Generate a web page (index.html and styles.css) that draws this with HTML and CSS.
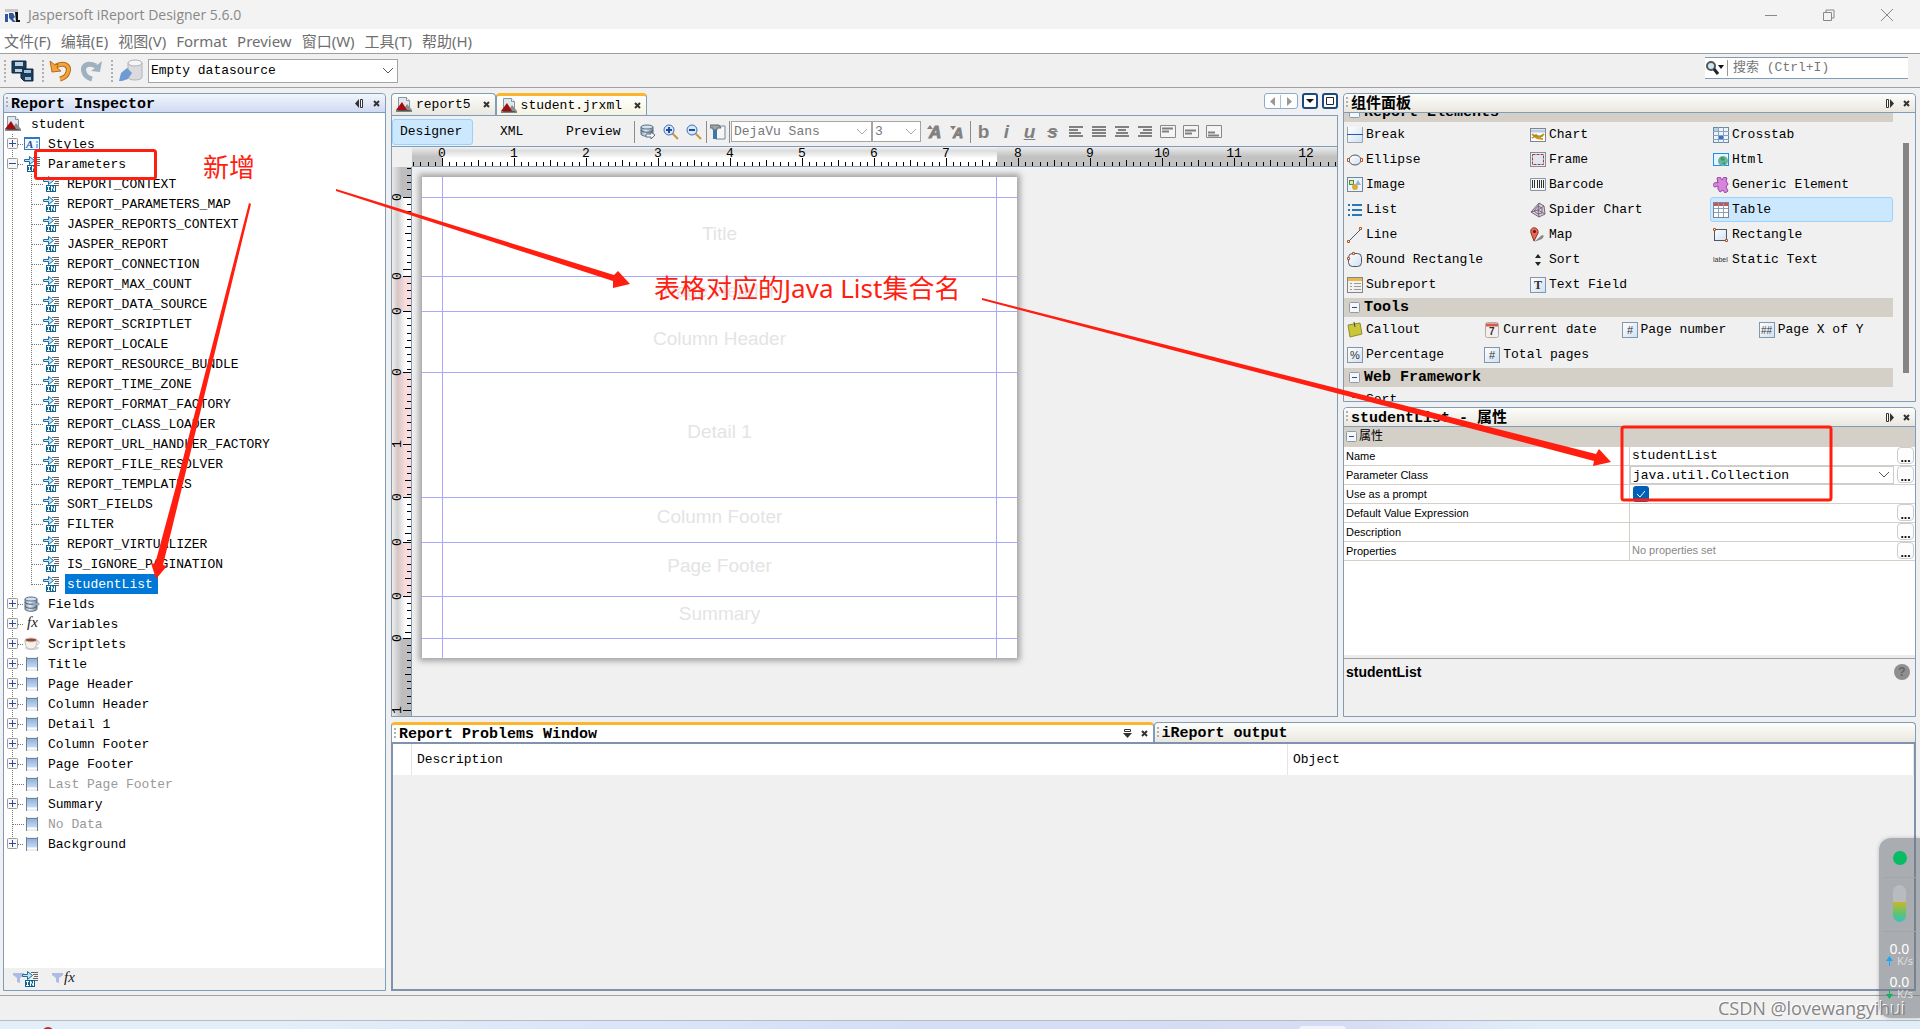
FILE: index.html
```html
<!DOCTYPE html>
<html lang="zh-CN">
<head>
<meta charset="utf-8">
<title>Jaspersoft iReport Designer 5.6.0</title>
<link rel="stylesheet" href="styles.css">
</head>
<body>
<svg class="defs" aria-hidden="true">
  <defs>
    <linearGradient id="g-band" x1="0" y1="0" x2="0" y2="1"><stop offset="0" stop-color="#8fb3dc"/><stop offset="1" stop-color="#c3d8f0"/></linearGradient>
    <linearGradient id="g-blue" x1="0" y1="0" x2="1" y2="1"><stop offset="0" stop-color="#fff"/><stop offset="1" stop-color="#cfe0f2"/></linearGradient>
    <linearGradient id="g-cyl" x1="0" y1="0" x2="1" y2="0"><stop offset="0" stop-color="#8a9db0"/><stop offset=".4" stop-color="#e4ecf4"/><stop offset="1" stop-color="#71869c"/></linearGradient>
    <pattern id="inch-h" width="72" height="19" patternUnits="userSpaceOnUse">
      <path d="M0 11h1v8h-1zM7 15h1v4h-1zM14 15h1v4h-1zM22 15h1v4h-1zM29 15h1v4h-1zM36 13h1v6h-1zM43 15h1v4h-1zM50 15h1v4h-1zM58 15h1v4h-1zM65 15h1v4h-1z"/>
    </pattern>
    <pattern id="inch-v" width="19" height="72" patternUnits="userSpaceOnUse">
      <path d="M11 0h8v1h-8zM15 7h4v1h-4zM15 14h4v1h-4zM15 22h4v1h-4zM15 29h4v1h-4zM13 36h6v1h-6zM15 43h4v1h-4zM15 50h4v1h-4zM15 58h4v1h-4zM15 65h4v1h-4z"/>
    </pattern>
  </defs>
  <symbol id="t-plus" viewBox="0 0 20 20"><path d="M8.500 0v20M14 10.500h6" stroke="#777" stroke-dasharray="1 1" fill="none"/><rect x="3.500" y="4.500" width="10" height="10" rx="1" fill="#f6f6f6" stroke="#9a9a9a"/><path d="M5 9.500h7M8.500 6v7" stroke="#2a4a9a"/></symbol>
  <symbol id="t-minus" viewBox="0 0 20 20"><path d="M8.500 0v20M14 10.500h6" stroke="#777" stroke-dasharray="1 1" fill="none"/><rect x="3.500" y="4.500" width="10" height="10" rx="1" fill="#f6f6f6" stroke="#9a9a9a"/><path d="M5 9.500h7" stroke="#2a4a9a"/></symbol>
  <symbol id="t-end" viewBox="0 0 20 20"><path d="M8.500 0v5M14 10.500h6" stroke="#777" stroke-dasharray="1 1" fill="none"/><rect x="3.500" y="4.500" width="10" height="10" rx="1" fill="#f6f6f6" stroke="#9a9a9a"/><path d="M5 9.500h7M8.500 6v7" stroke="#2a4a9a"/></symbol>
  <symbol id="t-leaf" viewBox="0 0 20 20"><path d="M8.500 0v20M9 10.500h11" stroke="#777" stroke-dasharray="1 1" fill="none"/></symbol>
  <symbol id="t-last" viewBox="0 0 20 20"><path d="M8.500 0v11M9 10.500h11" stroke="#777" stroke-dasharray="1 1" fill="none"/></symbol>
  <symbol id="t-bar" viewBox="0 0 20 20"><path d="M8.500 0v20" stroke="#777" stroke-dasharray="1 1" fill="none"/></symbol>
  <symbol id="i-report" viewBox="0 0 16 16"><path d="M2.500 .5h8l3 3v10h-11z" fill="#dfe8ef" stroke="#8796a3"/><path d="M10.500 .5v3h3" fill="#fff" stroke="#8796a3"/><path d="M7 13l4-6 5 6z" fill="#8d8d8d"/><path d="M0 13l6-8 5 8z" fill="#a50d0d"/><path d="M0 14h16" stroke="#111"/></symbol>
  <symbol id="i-style" viewBox="0 0 16 16"><rect x=".5" y="1.500" width="15" height="12" fill="#f2f8ff" stroke="#2e78c6"/><path d="M0 2h16" stroke="#2e78c6" stroke-width="2"/><text x="2" y="12" class="ic-serif" font-size="11" font-weight="bold" fill="#1c4f95">A</text><path d="M12 6h2M12 9h2M12 11h2" stroke="#2e78c6"/></symbol>
  <symbol id="i-param" viewBox="0 0 16 16"><path d="M9 1.500h7M11 3.500h5M12 5.500h4M11 7.500h5M12 9.500h4" stroke="#666"/><path d="M.5 3.500h5v-3l5 4-5 4v-3h-5z" fill="#bfe4fa" stroke="#1c6c9c"/><path d="M3 9h10v7H3z" fill="#11648f"/><path d="M4 10.500h3M5.500 10v5M4 14.500h3M8.500 15v-5l3 5v-5" fill="none" stroke="#fff"/></symbol>
  <symbol id="i-fields" viewBox="0 0 16 16"><path d="M1 3v10c0 3 12 3 12 0V3z" fill="url(#g-cyl)" stroke="#5b6f84"/><ellipse cx="7" cy="3" rx="6" ry="2" fill="#d4e0ec" stroke="#5b6f84"/><path d="M1 6c1 3 11 3 12 0M1 10c1 3 11 3 12 0" fill="none" stroke="#4a5d73"/><path d="M9 7h4V5l3 3-3 3V9H9z" fill="#91a8bf"/></symbol>
  <symbol id="i-query" viewBox="0 0 16 16"><path d="M1 3v7c0 3 12 3 12 0V3z" fill="url(#g-cyl)" stroke="#5b6f84"/><ellipse cx="7" cy="3" rx="6" ry="2" fill="#d4e0ec" stroke="#5b6f84"/><path d="M1 6c1 3 11 3 12 0" fill="none" stroke="#4a5d73"/><path d="M6 10h5V8l4 3-4 4v-2H6z" fill="#f4f7fa" stroke="#5b6f84"/></symbol>
  <symbol id="i-fx" viewBox="0 0 16 16"><text x="3" y="11" class="ic-serif" font-size="15" fill="#222">fx</text></symbol>
  <symbol id="i-cup" viewBox="0 0 16 16"><ellipse cx="8" cy="12" rx="7" ry="2" fill="#d6d2cf"/><path d="M1 4c0 6 2 9 6 9s6-3 6-9z" fill="#f4f1ee" stroke="#c2bcb7"/><path d="M13 5c3-1 3 4-1 4" fill="none" stroke="#c2bcb7"/><ellipse cx="7" cy="4" rx="6" ry="2" fill="#8c4a2c" stroke="#d8d0ca"/></symbol>
  <symbol id="i-band" viewBox="0 0 16 16"><path d="M2 1h12v14H2z" fill="#e9eef5"/><path d="M2 3h12v8H2z" fill="url(#g-band)"/><path d="M2 2.500h12M2.500 1v14M13.500 1v14" stroke="#6f8098"/><path d="M3 12.500h10" stroke="#fff"/></symbol>
  <symbol id="i-filter" viewBox="0 0 11 12"><path d="M0 0h11v2L7 5v5l-3-1V5L0 2z" fill="#aebbe6"/></symbol>
  <symbol id="i-x" viewBox="0 0 7 7"><path d="M1 1l5 5M6 1l-5 5" stroke="#333" stroke-width="2"/></symbol>
  <symbol id="i-slide-l" viewBox="0 0 9 9"><path d="M4 0v9L0 4.500z" fill="#333"/><path d="M5.500 .5h2v8h-2z" fill="#fff" stroke="#333"/></symbol>
  <symbol id="i-slide-r" viewBox="0 0 9 9"><path d="M5 0v9l4-4.500z" fill="#333"/><path d="M1.500 .5h2v8h-2z" fill="#fff" stroke="#333"/></symbol>
  <symbol id="i-slide-d" viewBox="0 0 9 9"><path d="M0 4h9L4.500 9z" fill="#333"/><path d="M1.500 .5h6v2h-6z" fill="#fff" stroke="#333"/></symbol>
  <symbol id="i-fold" viewBox="0 0 11 11"><rect x=".5" y=".5" width="10" height="10" rx="1" fill="#f6f6f6" stroke="#8c9cb0"/><path d="M3 5.500h5" stroke="#2a4a9a"/></symbol>
  <symbol id="i-grid" viewBox="0 0 16 16"><rect x=".5" y=".5" width="15" height="15" fill="url(#g-blue)" stroke="#8496a9"/></symbol>
  <symbol id="p-break" viewBox="0 0 16 16"><path d="M1 0h14v16H1z" fill="url(#g-blue)"/><path d="M.5 0v15.500h15V0" fill="none" stroke="#98a4b0"/><path d="M0 7.500h16" stroke="#2b5aa5"/></symbol>
  <symbol id="p-chart" viewBox="0 0 16 16"><rect x=".5" y="1.500" width="15" height="13" fill="#fff" stroke="#7b8794"/><path d="M1 4h14" stroke="#b6cce3" stroke-width="3"/><path d="M2 11l4-3 3 3 5-4M2 7l5 4 6 1" stroke="#e08f18" stroke-width="2" fill="none"/><path d="M3 9h10" stroke="#4f9c3c"/></symbol>
  <symbol id="p-crosstab" viewBox="0 0 16 16"><rect x=".5" y=".5" width="15" height="15" fill="#edf3fa" stroke="#71879e"/><path d="M5.500 0v16M10.500 0v16M0 4.500h16M0 8.500h16M0 12.500h16" stroke="#86a3c4"/><path d="M6 9h4v3H6z" fill="#3a6fd0"/><path d="M1 1h4v3H1z" fill="#b9cfe8"/></symbol>
  <symbol id="p-ellipse" viewBox="0 0 16 16"><ellipse cx="8" cy="8" rx="6" ry="5" fill="url(#g-blue)" stroke="#4c5866"/><path d="M.5 6.500h2v3h-2zM13.500 6.500h2v3h-2z" fill="#fff" stroke="#b7541b"/></symbol>
  <symbol id="p-frame" viewBox="0 0 16 16"><rect x=".5" y=".5" width="15" height="14" fill="#e4edf7" stroke="#7d8ea1"/><rect x="2.500" y="2.500" width="11" height="10" fill="#dbe7f4" stroke="#b7391b" stroke-dasharray="3 1"/></symbol>
  <symbol id="p-html" viewBox="0 0 16 16"><rect x=".5" y="1.500" width="15" height="12" fill="#e8f4ff" stroke="#1f8eee"/><circle cx="10" cy="9" r="5" fill="#66b4a6"/><path d="M7 6l3-1 2 3-3 1zM9 11l3-1v3z" fill="#3c9c3f"/></symbol>
  <symbol id="p-image" viewBox="0 0 16 16"><rect x=".5" y=".5" width="15" height="14" fill="#eaf3fb" stroke="#71879e"/><rect x="2.500" y="3.500" width="4" height="4" fill="#d3eab5" stroke="#4f8f30"/><path d="M11 3l3 5H8z" fill="#8fb4d6"/><circle cx="8" cy="10" r="3" fill="#e1a73e"/></symbol>
  <symbol id="p-generic" viewBox="0 0 16 16"><path d="M5 6c-4-2-7 3-3 4 1 0 2-1 3-1l0 3 2 3 3-2 2 3 3-2-2-4 2-3-2-3 1-3-3-1-2 3-2-3-3 1z" fill="#d883dc" stroke="#94489c"/></symbol>
  <symbol id="p-list" viewBox="0 0 16 16"><path d="M1 3h2M1 8h2M1 13h2M5 3h10M5 8h10M5 13h10" stroke="#2b76b5" stroke-width="2"/></symbol>
  <symbol id="p-spider" viewBox="0 0 16 16"><path d="M9 1l5 3 1 8-6 3-8-5z" fill="#d7d0da" stroke="#6d6771"/><path d="M8 4l4 2 0 5-4 1-4-3zM9 1l-1 7 6-4M8 8l7 4M8 8l1 7M8 8l-7 2" fill="none" stroke="#7c647f"/></symbol>
  <symbol id="p-table" viewBox="0 0 16 16"><rect x=".5" y=".5" width="15" height="15" fill="#fff" stroke="#78869a"/><path d="M1 2.500h14" stroke="#c95454" stroke-width="3"/><path d="M5.500 1v14M10.500 1v14M1 6.500h14M1 10.500h14" stroke="#8ca0b8"/></symbol>
  <symbol id="p-line" viewBox="0 0 16 16"><path d="M2 14L14 2" stroke="#4c5866"/><path d="M.5 13.500h2v2h-2zM12.500 .5h2v2h-2z" fill="#fff" stroke="#b7541b"/></symbol>
  <symbol id="p-map" viewBox="0 0 16 16"><path d="M4 15l8-7 2 1-2 3z" fill="#888"/><path d="M4 14L1 6c-2-7 8-7 7 0z" fill="#ea6a58" stroke="#8c2f22"/><circle cx="4.500" cy="4.500" r="1.500" fill="#5c1710"/></symbol>
  <symbol id="p-rect" viewBox="0 0 16 16"><rect x="1.500" y="2.500" width="12" height="11" fill="url(#g-blue)" stroke="#4c5866"/><path d="M.5 1.500h2v2h-2zM12.500 12.500h2v2h-2z" fill="#fff" stroke="#b7541b"/></symbol>
  <symbol id="p-round" viewBox="0 0 16 16"><rect x="1.500" y="1.500" width="13" height="13" rx="4" fill="url(#g-blue)" stroke="#4c5866"/><path d="M5.500 .5h2v2h-2zM.5 5.500h2v2h-2z" fill="#fff" stroke="#b7541b"/></symbol>
  <symbol id="p-sort" viewBox="0 0 16 16"><path d="M8 2l3 4H5zM8 14l3-4H5z" fill="#222"/></symbol>
  <symbol id="p-label" viewBox="0 0 16 16"><text x="0" y="10" class="ic-sans" font-size="7" fill="#333">label</text></symbol>
  <symbol id="p-sub" viewBox="0 0 16 16"><rect x=".5" y=".5" width="15" height="15" fill="#f1f1f1" stroke="#858585"/><path d="M1 2.500h14" stroke="#e8b948" stroke-width="3"/><path d="M3 6.500h2M3 9.500h2M3 12.500h2M7 6.500h7M7 9.500h7M7 12.500h7" stroke="#999"/></symbol>
  <symbol id="p-text" viewBox="0 0 16 16"><use href="#i-grid"/><text x="4" y="12" class="ic-bserif" font-size="12" fill="#333">T</text></symbol>
  <symbol id="p-callout" viewBox="0 0 16 16"><path d="M1 3l12-2 2 11-12 3z" fill="#c9c63a" stroke="#8f8d2a"/><path d="M7 0l1 5" stroke="#444"/></symbol>
  <symbol id="p-date" viewBox="0 0 16 16"><rect x="1.500" y=".5" width="13" height="15" rx="2" fill="#f2f0ee" stroke="#b9a9a4"/><path d="M2 3h12" stroke="#d65a4b" stroke-width="3"/><text x="5" y="13" class="ic-sans" font-size="10" font-weight="bold" fill="#333">7</text></symbol>
  <symbol id="p-hash" viewBox="0 0 16 16"><use href="#i-grid"/><text x="5" y="12" class="ic-sans" font-size="11" fill="#333">#</text></symbol>
  <symbol id="p-hash2" viewBox="0 0 16 16"><use href="#i-grid"/><text x="2" y="12" class="ic-sans" font-size="10" fill="#333">##</text></symbol>
  <symbol id="p-pct" viewBox="0 0 16 16"><use href="#i-grid"/><text x="3" y="12" class="ic-sans" font-size="11" fill="#333">%</text></symbol>
</svg>

<header class="titlebar">
  <svg width="16" height="16" viewBox="0 0 16 16"><path d="M1 2h13v3H1z" fill="#c8c8c8"/><path d="M1 7h3v8H1zM5 6h4l2 4-2 2 3 3H9l-4-4z" fill="#31569b"/><path d="M11 5h3v8h2v2h-4z" fill="#111"/></svg>
  <h1>Jaspersoft iReport Designer 5.6.0</h1>
  <div class="winbtns">
    <button aria-label="Minimize"><svg width="12" height="12"><path d="M0 6.500h12" stroke="#888"/></svg></button>
    <button aria-label="Restore"><svg width="12" height="12"><path d="M.5 3.500h8v8h-8zM3 3V1h8v8H9" fill="none" stroke="#888"/></svg></button>
    <button aria-label="Close"><svg width="12" height="12"><path d="M0 0l12 12M12 0L0 12" stroke="#888"/></svg></button>
  </div>
</header>
<nav class="menubar">
  <a href="#">文件(F)</a><a href="#">编辑(E)</a><a href="#">视图(V)</a><a href="#">Format</a><a href="#">Preview</a><a href="#">窗口(W)</a><a href="#">工具(T)</a><a href="#">帮助(H)</a>
</nav>
<div class="toolbar">
  <i class="grip"></i>
  <button class="tb" aria-label="Save all"><svg width="24" height="24"><path d="M1 2h14v12H1zM10 10h12v12H13l-3-3z" fill="#1d3e5a" stroke="#12283c"/><path d="M4 3h8v4H4zM4 10h7v3H4z" fill="#bcd2e4"/><path d="M13 11h7v3h-7zM14 18h6v3h-6z" fill="#9fc0dc"/></svg></button>
  <i class="grip"></i>
  <button class="tb" aria-label="Undo"><svg width="24" height="24"><path d="M7 7c9-4 14 0 12 6-1 4-4 6-8 7" fill="none" stroke="#b8691b" stroke-width="5"/><path d="M7 7c9-4 14 0 12 6-1 4-4 6-8 7" fill="none" stroke="#f2a43a" stroke-width="3"/><path d="M1 2l2 11 9-1-4-3 1-4-3 1z" fill="#f2a43a" stroke="#b8691b"/></svg></button>
  <button class="tb" aria-label="Redo"><svg width="24" height="24"><path d="M16 7C7 3 2 7 4 13c1 4 4 6 8 7" fill="none" stroke="#9fb0bf" stroke-width="5"/><path d="M22 2l-2 11-9-1 4-3-1-4 3 1z" fill="#9fb0bf"/></svg></button>
  <i class="grip"></i>
  <button class="tb data" aria-label="Data sources"><svg width="26" height="24"><path d="M10 4v14c0 4 14 4 14 0V4z" fill="#d9dbdf" stroke="#aeb2b8"/><ellipse cx="17" cy="4" rx="7" ry="3" fill="#f4f5f7" stroke="#aeb2b8"/><path d="M1 22l2-8 6-5 5 5-4 6-6 2z" fill="#6f9ad3"/></svg></button>
  <span class="combo source"><select aria-label="Datasource"><option>Empty datasource</option></select><svg width="10" height="6"><path d="M0 0l5 5 5-5" fill="none" stroke="#555"/></svg></span>
  <label class="search"><svg width="20" height="16"><circle cx="6" cy="6" r="4" fill="#cfe6f5" stroke="#555" stroke-width="2"/><path d="M9 9l4 5" stroke="#222" stroke-width="3"/><path d="M13 5h6l-3 4z" fill="#111"/></svg><input type="text" placeholder="搜索 (Ctrl+I)" aria-label="搜索"></label>
</div>

<main class="work">
  <section class="panel inspector">
    <div class="head active"><i class="grip small"></i><h2>Report Inspector</h2><button aria-label="Slide"><svg width="9" height="9"><use href="#i-slide-l"/></svg></button><button aria-label="Close"><svg width="7" height="7"><use href="#i-x"/></svg></button></div>
    <ul class="tree">
      <li class="root"><svg class="ic"><use href="#i-report"/></svg><span>student</span></li>
      <li><svg class="tw"><use href="#t-plus"/></svg><svg class="ic"><use href="#i-style"/></svg><span>Styles</span></li>
      <li><svg class="tw"><use href="#t-minus"/></svg><svg class="ic"><use href="#i-param"/></svg><span>Parameters</span></li>
      <li><svg class="tw"><use href="#t-bar"/></svg><svg class="tw"><use href="#t-leaf"/></svg><svg class="ic"><use href="#i-param"/></svg><span>REPORT_CONTEXT</span></li>
      <li><svg class="tw"><use href="#t-bar"/></svg><svg class="tw"><use href="#t-leaf"/></svg><svg class="ic"><use href="#i-param"/></svg><span>REPORT_PARAMETERS_MAP</span></li>
      <li><svg class="tw"><use href="#t-bar"/></svg><svg class="tw"><use href="#t-leaf"/></svg><svg class="ic"><use href="#i-param"/></svg><span>JASPER_REPORTS_CONTEXT</span></li>
      <li><svg class="tw"><use href="#t-bar"/></svg><svg class="tw"><use href="#t-leaf"/></svg><svg class="ic"><use href="#i-param"/></svg><span>JASPER_REPORT</span></li>
      <li><svg class="tw"><use href="#t-bar"/></svg><svg class="tw"><use href="#t-leaf"/></svg><svg class="ic"><use href="#i-param"/></svg><span>REPORT_CONNECTION</span></li>
      <li><svg class="tw"><use href="#t-bar"/></svg><svg class="tw"><use href="#t-leaf"/></svg><svg class="ic"><use href="#i-param"/></svg><span>REPORT_MAX_COUNT</span></li>
      <li><svg class="tw"><use href="#t-bar"/></svg><svg class="tw"><use href="#t-leaf"/></svg><svg class="ic"><use href="#i-param"/></svg><span>REPORT_DATA_SOURCE</span></li>
      <li><svg class="tw"><use href="#t-bar"/></svg><svg class="tw"><use href="#t-leaf"/></svg><svg class="ic"><use href="#i-param"/></svg><span>REPORT_SCRIPTLET</span></li>
      <li><svg class="tw"><use href="#t-bar"/></svg><svg class="tw"><use href="#t-leaf"/></svg><svg class="ic"><use href="#i-param"/></svg><span>REPORT_LOCALE</span></li>
      <li><svg class="tw"><use href="#t-bar"/></svg><svg class="tw"><use href="#t-leaf"/></svg><svg class="ic"><use href="#i-param"/></svg><span>REPORT_RESOURCE_BUNDLE</span></li>
      <li><svg class="tw"><use href="#t-bar"/></svg><svg class="tw"><use href="#t-leaf"/></svg><svg class="ic"><use href="#i-param"/></svg><span>REPORT_TIME_ZONE</span></li>
      <li><svg class="tw"><use href="#t-bar"/></svg><svg class="tw"><use href="#t-leaf"/></svg><svg class="ic"><use href="#i-param"/></svg><span>REPORT_FORMAT_FACTORY</span></li>
      <li><svg class="tw"><use href="#t-bar"/></svg><svg class="tw"><use href="#t-leaf"/></svg><svg class="ic"><use href="#i-param"/></svg><span>REPORT_CLASS_LOADER</span></li>
      <li><svg class="tw"><use href="#t-bar"/></svg><svg class="tw"><use href="#t-leaf"/></svg><svg class="ic"><use href="#i-param"/></svg><span>REPORT_URL_HANDLER_FACTORY</span></li>
      <li><svg class="tw"><use href="#t-bar"/></svg><svg class="tw"><use href="#t-leaf"/></svg><svg class="ic"><use href="#i-param"/></svg><span>REPORT_FILE_RESOLVER</span></li>
      <li><svg class="tw"><use href="#t-bar"/></svg><svg class="tw"><use href="#t-leaf"/></svg><svg class="ic"><use href="#i-param"/></svg><span>REPORT_TEMPLATES</span></li>
      <li><svg class="tw"><use href="#t-bar"/></svg><svg class="tw"><use href="#t-leaf"/></svg><svg class="ic"><use href="#i-param"/></svg><span>SORT_FIELDS</span></li>
      <li><svg class="tw"><use href="#t-bar"/></svg><svg class="tw"><use href="#t-leaf"/></svg><svg class="ic"><use href="#i-param"/></svg><span>FILTER</span></li>
      <li><svg class="tw"><use href="#t-bar"/></svg><svg class="tw"><use href="#t-leaf"/></svg><svg class="ic"><use href="#i-param"/></svg><span>REPORT_VIRTUALIZER</span></li>
      <li><svg class="tw"><use href="#t-bar"/></svg><svg class="tw"><use href="#t-leaf"/></svg><svg class="ic"><use href="#i-param"/></svg><span>IS_IGNORE_PAGINATION</span></li>
      <li><svg class="tw"><use href="#t-bar"/></svg><svg class="tw"><use href="#t-last"/></svg><svg class="ic"><use href="#i-param"/></svg><span class="selected">studentList</span></li>
      <li><svg class="tw"><use href="#t-plus"/></svg><svg class="ic"><use href="#i-fields"/></svg><span>Fields</span></li>
      <li><svg class="tw"><use href="#t-plus"/></svg><svg class="ic"><use href="#i-fx"/></svg><span>Variables</span></li>
      <li><svg class="tw"><use href="#t-plus"/></svg><svg class="ic"><use href="#i-cup"/></svg><span>Scriptlets</span></li>
      <li><svg class="tw"><use href="#t-plus"/></svg><svg class="ic"><use href="#i-band"/></svg><span>Title</span></li>
      <li><svg class="tw"><use href="#t-plus"/></svg><svg class="ic"><use href="#i-band"/></svg><span>Page Header</span></li>
      <li><svg class="tw"><use href="#t-plus"/></svg><svg class="ic"><use href="#i-band"/></svg><span>Column Header</span></li>
      <li><svg class="tw"><use href="#t-plus"/></svg><svg class="ic"><use href="#i-band"/></svg><span>Detail 1</span></li>
      <li><svg class="tw"><use href="#t-plus"/></svg><svg class="ic"><use href="#i-band"/></svg><span>Column Footer</span></li>
      <li><svg class="tw"><use href="#t-plus"/></svg><svg class="ic"><use href="#i-band"/></svg><span>Page Footer</span></li>
      <li><svg class="tw"><use href="#t-leaf"/></svg><svg class="ic"><use href="#i-band"/></svg><span class="off">Last Page Footer</span></li>
      <li><svg class="tw"><use href="#t-plus"/></svg><svg class="ic"><use href="#i-band"/></svg><span>Summary</span></li>
      <li><svg class="tw"><use href="#t-leaf"/></svg><svg class="ic"><use href="#i-band"/></svg><span class="off">No Data</span></li>
      <li><svg class="tw"><use href="#t-end"/></svg><svg class="ic"><use href="#i-band"/></svg><span>Background</span></li>
    </ul>
    <div class="foot">
      <button aria-label="Filter parameters"><svg width="11" height="12"><use href="#i-filter"/></svg><svg class="ic"><use href="#i-param"/></svg></button>
      <button aria-label="Filter variables"><svg width="11" height="12"><use href="#i-filter"/></svg><svg class="ic"><use href="#i-fx"/></svg></button>
    </div>
  </section>

  <section class="editor">
    <div class="tabs">
      <div class="tab"><svg class="ic"><use href="#i-report"/></svg><span>report5</span><button aria-label="Close"><svg width="7" height="7"><use href="#i-x"/></svg></button></div>
      <div class="tab current"><svg class="ic"><use href="#i-report"/></svg><span>student.jrxml</span><button aria-label="Close"><svg width="7" height="7"><use href="#i-x"/></svg></button></div>
      <div class="tabnav">
        <button class="pair" aria-label="Scroll tabs"><svg width="32" height="13"><path d="M10 2v9L5 6.500zM22 2v9l5-4.500z" fill="#999"/><path d="M15.500 0v13" stroke="#a9bfd6"/></svg></button>
        <button class="strong" aria-label="Tab list"><svg width="12" height="12"><path d="M2 4h8l-4 4z" fill="#111"/></svg></button>
        <button class="strong" aria-label="Maximize"><svg width="12" height="12"><path d="M2.500 2.500h7v7h-7z" fill="none" stroke="#222"/></svg></button>
      </div>
    </div>
    <div class="frame">
      <div class="edbar">
        <button class="mode on">Designer</button><button class="mode">XML</button><button class="mode">Preview</button>
        <i class="sep"></i>
        <button class="eb" aria-label="Query"><svg class="ic"><use href="#i-query"/></svg></button>
        <button class="eb" aria-label="Zoom in"><svg width="16" height="16"><path d="M9 9l6 6" stroke="#c8953a" stroke-width="2"/><circle cx="6" cy="6" r="5" fill="#d6e8fb" stroke="#3d6fb5"/><path d="M3 6h6M6 3v6" stroke="#1b4f9e" stroke-width="2"/></svg></button>
        <button class="eb" aria-label="Zoom out"><svg width="16" height="16"><path d="M9 9l6 6" stroke="#c8953a" stroke-width="2"/><circle cx="6" cy="6" r="5" fill="#d6e8fb" stroke="#3d6fb5"/><path d="M3 6h6" stroke="#1b4f9e" stroke-width="2"/></svg></button>
        <i class="sep"></i>
        <button class="hammer" aria-label="Build"><svg width="16" height="16"><path d="M6 2h9v13H6z" fill="#f4f6f8" stroke="#7a8792"/><path d="M0 1h9l2 3H7v2H3V4H0z" fill="#9aa8a0" stroke="#667"/><path d="M3 6h4v9H3z" fill="#3c78aa"/></svg></button>
        <i class="sep"></i>
        <span class="combo font"><select aria-label="Font" disabled><option>DejaVu Sans</option></select><svg width="10" height="6"><path d="M0 0l5 5 5-5" fill="none" stroke="#aaa"/></svg></span>
        <span class="combo size"><select aria-label="Size" disabled><option>3</option></select><svg width="10" height="6"><path d="M0 0l5 5 5-5" fill="none" stroke="#aaa"/></svg></span>
        <button class="eb" aria-label="Larger"><svg width="16" height="16"><path d="M0 5h6L3 1z" fill="#808080"/><text x="2" y="14" class="ic-bi" font-size="17">A</text></svg></button>
        <button class="eb" aria-label="Smaller"><svg width="16" height="16"><path d="M0 2h6L3 6z" fill="#808080"/><text x="3" y="14" class="ic-bi" font-size="14">A</text></svg></button>
        <i class="sep"></i>
        <button class="eb glyph">b</button><button class="eb glyph it">i</button><button class="eb glyph it un">u</button><button class="eb glyph it st">s</button>
        <button class="eb" aria-label="Left"><svg width="16" height="16"><path d="M1 3h14M1 6h9M1 9h12M1 12h14" stroke="#808080" stroke-width="2"/></svg></button>
        <button class="eb" aria-label="Justify"><svg width="16" height="16"><path d="M1 3h14M1 6h14M1 9h14M1 12h14" stroke="#808080" stroke-width="2"/></svg></button>
        <button class="eb" aria-label="Center"><svg width="16" height="16"><path d="M1 3h14M4 6h8M2 9h12M1 12h14" stroke="#808080" stroke-width="2"/></svg></button>
        <button class="eb" aria-label="Right"><svg width="16" height="16"><path d="M1 3h14M6 6h9M3 9h12M1 12h14" stroke="#808080" stroke-width="2"/></svg></button>
        <button class="eb" aria-label="Top"><svg width="16" height="16"><path d="M.5 1.500h15v12H.5z" fill="#f4f4f4" stroke="#888"/><path d="M2 4.500h11M2 7.500h7" stroke="#808080" stroke-width="2"/></svg></button>
        <button class="eb" aria-label="Middle"><svg width="16" height="16"><path d="M.5 1.500h15v12H.5z" fill="#f4f4f4" stroke="#888"/><path d="M2 6.500h11M2 9.500h7" stroke="#808080" stroke-width="2"/></svg></button>
        <button class="eb" aria-label="Bottom"><svg width="16" height="16"><path d="M.5 1.500h15v12H.5z" fill="#f4f4f4" stroke="#888"/><path d="M2 8.500h7M2 11.500h11" stroke="#808080" stroke-width="2"/></svg></button>
      </div>
      <div class="canvas">
        <div class="corner"></div>
        <div class="ruler-h">
          <div class="rh-page"></div>
          <svg><svg x="30" width="100%" height="19" overflow="visible"><rect x="-30" width="2000" height="19" fill="url(#inch-h)"/></svg>
            <g class="nums"><text x="30" y="10">0</text><text x="102" y="10">1</text><text x="174" y="10">2</text><text x="246" y="10">3</text><text x="318" y="10">4</text><text x="390" y="10">5</text><text x="462" y="10">6</text><text x="534" y="10">7</text><text x="606" y="10">8</text><text x="678" y="10">9</text><text x="750" y="10">10</text><text x="822" y="10">11</text><text x="894" y="10">12</text></g>
          </svg>
        </div>
        <div class="ruler-v">
          <svg class="rv-top"><path d="M15 1.500h4M15 8.500h4M15 15.500h4M15 22.500h4" stroke="#000"/></svg>
          <svg class="b-title"><rect width="19" height="100%" fill="url(#inch-v)"/><text transform="translate(9 4) rotate(-90)">0</text></svg>
          <svg class="b-phead pink"><rect width="19" height="100%" fill="url(#inch-v)"/><text transform="translate(9 4) rotate(-90)">0</text></svg>
          <svg class="b-chead"><rect width="19" height="100%" fill="url(#inch-v)"/><text transform="translate(9 4) rotate(-90)">0</text></svg>
          <svg class="b-detail pink"><rect width="19" height="100%" fill="url(#inch-v)"/><text transform="translate(9 4) rotate(-90)">0</text><text transform="translate(9 76) rotate(-90)">1</text></svg>
          <svg class="b-cfoot"><rect width="19" height="100%" fill="url(#inch-v)"/><text transform="translate(9 4) rotate(-90)">0</text></svg>
          <svg class="b-pfoot pink"><rect width="19" height="100%" fill="url(#inch-v)"/><text transform="translate(9 4) rotate(-90)">0</text></svg>
          <svg class="b-sum"><rect width="19" height="100%" fill="url(#inch-v)"/><text transform="translate(9 4) rotate(-90)">0</text></svg>
          <svg class="rv-rest"><rect width="19" height="100%" fill="url(#inch-v)"/><text transform="translate(9 4) rotate(-90)">0</text><text transform="translate(9 76) rotate(-90)">1</text></svg>
        </div>
        <div class="desk">
          <div class="page">
            <div class="b-margin"></div>
            <div class="band b-title">Title</div>
            <div class="band b-phead">Page Header</div>
            <div class="band b-chead">Column Header</div>
            <div class="band b-detail">Detail 1</div>
            <div class="band b-cfoot">Column Footer</div>
            <div class="band b-pfoot">Page Footer</div>
            <div class="band b-sum">Summary</div>
            <div class="band b-margin"></div>
          </div>
        </div>
      </div>
    </div>
  </section>

  <div class="side">
    <section class="panel palette">
      <div class="head"><i class="grip small"></i><h2>组件面板</h2><button aria-label="Slide"><svg width="9" height="9"><use href="#i-slide-r"/></svg></button><button aria-label="Close"><svg width="7" height="7"><use href="#i-x"/></svg></button></div>
      <div class="scroll">
        <div class="items">
          <h3 class="cut"><svg width="11" height="11"><use href="#i-fold"/></svg>Report Elements</h3>
          <div class="three">
            <button><svg class="ic"><use href="#p-break"/></svg>Break</button><button><svg class="ic"><use href="#p-chart"/></svg>Chart</button><button><svg class="ic"><use href="#p-crosstab"/></svg>Crosstab</button>
            <button><svg class="ic"><use href="#p-ellipse"/></svg>Ellipse</button><button><svg class="ic"><use href="#p-frame"/></svg>Frame</button><button><svg class="ic"><use href="#p-html"/></svg>Html</button>
            <button><svg class="ic"><use href="#p-image"/></svg>Image</button><button><svg class="ic"><path d="M.5 1.500h15v12H.5z" fill="#f4f6f8" stroke="#8496a9"/><path d="M2.500 3v8M4.500 3v8M7.500 3v8M9.500 3v8M11.500 3v8M13.500 3v8" stroke="#333"/></svg>Barcode</button><button><svg class="ic"><use href="#p-generic"/></svg>Generic Element</button>
            <button><svg class="ic"><use href="#p-list"/></svg>List</button><button><svg class="ic"><use href="#p-spider"/></svg>Spider Chart</button><button class="on"><svg class="ic"><use href="#p-table"/></svg>Table</button>
            <button><svg class="ic"><use href="#p-line"/></svg>Line</button><button><svg class="ic"><use href="#p-map"/></svg>Map</button><button><svg class="ic"><use href="#p-rect"/></svg>Rectangle</button>
            <button><svg class="ic"><use href="#p-round"/></svg>Round Rectangle</button><button><svg class="ic"><use href="#p-sort"/></svg>Sort</button><button><svg class="ic"><use href="#p-label"/></svg>Static Text</button>
            <button><svg class="ic"><use href="#p-sub"/></svg>Subreport</button><button><svg class="ic"><use href="#p-text"/></svg>Text Field</button>
          </div>
          <h3><svg width="11" height="11"><use href="#i-fold"/></svg>Tools</h3>
          <div class="four">
            <button><svg class="ic"><use href="#p-callout"/></svg>Callout</button><button><svg class="ic"><use href="#p-date"/></svg>Current date</button><button><svg class="ic"><use href="#p-hash"/></svg>Page number</button><button><svg class="ic"><use href="#p-hash2"/></svg>Page X of Y</button>
            <button><svg class="ic"><use href="#p-pct"/></svg>Percentage</button><button><svg class="ic"><use href="#p-hash"/></svg>Total pages</button>
          </div>
          <h3><svg width="11" height="11"><use href="#i-fold"/></svg>Web Framework</h3>
          <div class="four"><button><svg class="ic"><use href="#p-sort"/></svg>Sort</button></div>
        </div>
        <div class="track"><div class="thumb"></div></div>
      </div>
    </section>
    <section class="panel props">
      <div class="head"><i class="grip small"></i><h2>studentList - 属性</h2><button aria-label="Slide"><svg width="9" height="9"><use href="#i-slide-r"/></svg></button><button aria-label="Close"><svg width="7" height="7"><use href="#i-x"/></svg></button></div>
      <table>
        <thead><tr><th colspan="3"><span><svg width="11" height="11"><use href="#i-fold"/></svg>属性</span></th></tr></thead>
        <tbody>
          <tr><th>Name</th><td><input class="val" type="text" value="studentList" aria-label="Name"></td><td class="more"><button>...</button></td></tr>
          <tr><th>Parameter Class</th><td><span class="combo cls"><select aria-label="Parameter Class"><option>java.util.Collection</option></select><svg width="10" height="6"><path d="M0 0l5 5 5-5" fill="none" stroke="#555"/></svg></span></td><td class="more"><button>...</button></td></tr>
          <tr><th><label for="prompt">Use as a prompt</label></th><td><span class="tick"><input id="prompt" type="checkbox" checked><svg width="8" height="6"><path d="M0 3l3 3 5-6" fill="none" stroke="#fff"/></svg></span></td><td class="more"></td></tr>
          <tr><th>Default Value Expression</th><td></td><td class="more"><button>...</button></td></tr>
          <tr><th>Description</th><td></td><td class="more"><button>...</button></td></tr>
          <tr><th>Properties</th><td class="off">No properties set</td><td class="more"><button>...</button></td></tr>
        </tbody>
      </table>
      <div class="desc"><strong>studentList</strong><button aria-label="Help">?</button></div>
    </section>
  </div>

  <section class="output">
    <div class="otabs">
      <div class="head hot"><i class="grip small"></i><h2>Report Problems Window</h2><button aria-label="Slide"><svg width="9" height="9"><use href="#i-slide-d"/></svg></button><button aria-label="Close"><svg width="7" height="7"><use href="#i-x"/></svg></button></div>
      <div class="head"><i class="grip small"></i><h2>iReport output</h2></div>
    </div>
    <div class="obody">
      <table><thead><tr><th class="mark"></th><th class="d">Description</th><th>Object</th></tr></thead></table>
    </div>
  </section>
</main>
<footer class="status"></footer>
<div class="taskbar"><i class="dot"></i><i class="pill"></i></div>

<aside class="meter">
  <i class="led"></i><hr><i class="gauge"></i><hr>
  <div class="rate">0.0<small><svg width="7" height="10"><path d="M0 5l3.500-5L7 5H4v5H3V5z" fill="#1aa7f5"/></svg>K/s</small></div>
  <div class="rate">0.0<small><svg width="7" height="10"><path d="M0 5l3.500 5L7 5H4V0H3v5z" fill="#12b35c"/></svg>K/s</small></div>
</aside>
<div class="watermark">CSDN @lovewangyihui</div>
<svg class="notes">
  <g fill="none" stroke="#ff1e10" stroke-width="3"><rect x="35.500" y="150.500" width="120" height="28" rx="2"/><rect x="1622" y="427" width="209" height="73" rx="2"/></g>
  <g fill="#ff1e10">
    <path d="M336 189L614 275 618 271 630 284 613 288 613 281 336 191z"/>
    <path d="M249 203L175 490 155 564 151 563 156 579 167 566 163 565 185 475 251 204z"/>
    <path d="M982 298L1596 454 1599 449 1611 462 1593 466 1594 461 982 300z"/>
    <text x="203" y="177">新增</text>
    <text x="654" y="298">表格对应的Java List集合名</text>
  </g>
</svg>
</body>
</html>
```
FILE: styles.css
```css
* { box-sizing: border-box; }
:root {
  --line: #7f9db9;
  --mono: "Liberation Mono", "Noto Sans CJK SC", monospace;
  --ui: "Noto Sans", "Noto Sans CJK SC", sans-serif;
  --sans: "Liberation Sans", "Noto Sans CJK SC", sans-serif;
}
body {
  margin: 0;
  min-height: 100vh;
  display: flex;
  flex-direction: column;
  position: relative;
  background: #f0f0f0;
  color: #000;
  font: 13px/20px var(--mono);
}
button { padding: 0; border: 0; background: none; font: inherit; color: inherit; display: flex; align-items: center; }
h1, h2, h3, ul { margin: 0; padding: 0; font: inherit; list-style: none; }
svg { display: block; flex: none; }
.defs { position: absolute; width: 0; height: 0; }
.ic { width: 16px; height: 16px; }
.ic-serif { font-family: "Liberation Serif", serif; font-style: italic; }
.ic-bserif { font-family: "Liberation Serif", serif; font-weight: bold; }
.ic-sans { font-family: "Liberation Sans", sans-serif; }
.ic-bi { font-family: "Liberation Sans", sans-serif; font-weight: bold; font-style: italic; fill: #808080; stroke: #808080; }

.titlebar { display: flex; align-items: center; height: 29px; padding: 0 20px 0 4px; gap: 8px; background: #f3f3f3; color: #888; }
.titlebar h1 { font: 14px/20px "Open Sans", sans-serif; flex: 1; }
.winbtns { display: flex; gap: 46px; padding-right: 7px; }
.menubar { display: flex; gap: 10px; height: 24px; padding: 0 4px; background: #fff; font: 15px/24px var(--ui); }
.menubar a { color: #6e6e6e; text-decoration: none; }

.toolbar { display: flex; align-items: center; height: 35px; padding: 0 12px 0 4px; border-top: 1px solid #a0a0a0; border-bottom: 1px solid #a0a0a0; }
.grip { flex: none; width: 2px; height: 22px; margin-right: 5px; background: repeating-linear-gradient(#b0b0b0 0 2px, transparent 2px 4px); }
.grip.small { height: 12px; margin: 0 3px 0 2px; }
.tb { width: 31px; }
.tb.data { width: 30px; }
.combo { position: relative; display: flex; align-items: center; background: #fff; border: 1px solid #a5a5a5; }
.combo select { appearance: none; width: 100%; height: 100%; padding: 0 20px 0 2px; border: 0; background: none; font: 13px/18px var(--mono); color: #000; opacity: 1; }
.combo svg { position: absolute; right: 4px; pointer-events: none; }
.combo select:disabled { color: #777; }
.combo.source { width: 250px; height: 24px; }
.search { display: flex; align-items: center; width: 203px; height: 22px; margin: 0 0 6px auto; background: #fff; border: solid var(--line); border-width: 1px 0; }
.search input { width: 100%; height: 16px; margin-left: 2px; padding: 0 5px; border: 0; border-left: 1px solid #999; outline: 0; font: 13px/16px var(--mono); }
.search input::placeholder { color: #777; }

.work { flex: 1; display: grid; grid-template-columns: 383px minmax(0, 1fr) 573px; grid-template-rows: minmax(0, 1fr) 269px; gap: 5px; padding: 5px 4px 4px 3px; }
.panel { display: flex; flex-direction: column; border: 1px solid var(--line); border-radius: 4px 4px 0 0; min-height: 0; }
.head { flex: none; display: flex; align-items: center; height: 19px; padding-right: 5px; background: linear-gradient(#fdfdfa, #e9e7df); border-bottom: 1px solid var(--line); border-radius: 4px 4px 0 0; }
.head h2 { flex: 1; padding-top: 3px; font: bold 15px/18px var(--mono); white-space: nowrap; }
.head button { margin-left: 9px; }
.head.active { background: linear-gradient(#f2f6fd, #cfdaf2); }

.inspector { grid-row: 1 / 3; background: #fff; }
.tree { flex: 1; padding-top: 1px; }
.tree li { display: flex; align-items: center; height: 20px; }
.tree li.root { padding-left: 1px; gap: 2px; }
.tw { width: 20px; height: 20px; }
.tw + .tw { margin-left: -1px; }
.tree span { margin-left: 6px; padding: 2px 2px 0; line-height: 18px; white-space: nowrap; }
.tree .selected { background: #0078d7; color: #fff; padding-right: 5px; }
.tree .off { color: #999; }
.foot { flex: none; display: flex; gap: 14px; height: 22px; padding-left: 9px; background: #f0f0f0; }
.foot .ic { margin-left: -2px; }

.editor { display: flex; flex-direction: column; min-height: 0; }
.tabs { display: flex; height: 22px; }
.tab { display: flex; align-items: center; gap: 4px; padding: 0 5px 0 4px; border: 1px solid var(--line); border-bottom: 0; border-radius: 4px 4px 0 0; background: linear-gradient(#fdfdfa, #e9e7df); }
.tab button { margin-left: 8px; }
.tab.current { border-top: 3px solid #fcb62e; background: linear-gradient(#fff, #f6f3e0); }
.tabnav { display: flex; gap: 4px; margin-left: auto; height: 16px; }
.tabnav button { border: 1px solid #8aaad0; border-radius: 3px; background: #fff; justify-content: center; }
.tabnav .strong { width: 16px; border: 2px solid #1b4a80; }
.frame { flex: 1; display: flex; flex-direction: column; border: 1px solid var(--line); min-height: 0; }
.edbar { flex: none; display: flex; align-items: center; height: 30px; padding-top: 1px; }
.mode { width: 81px; height: 26px; padding-left: 7px; border: 1px solid transparent; border-radius: 3px; }
.mode.on { background: #cce8ff; border-color: #99d1ff; }
.mode + .mode { width: 66px; padding-left: 26px; }
.mode + .mode + .mode { width: 94px; }
.sep { width: 1px; height: 22px; margin: 0 1px; background: #8c8c8c; }
.eb { width: 23px; height: 24px; justify-content: center; }
.hammer { margin: 0 2px; }
.glyph { font: bold 19px/24px var(--sans); color: #808080; }
.it { font-style: italic; }
.un { text-decoration: underline; }
.st { text-decoration: line-through; }
.combo.font { width: 141px; height: 21px; }
.combo.size { width: 49px; height: 21px; margin-right: 2px; }

.canvas { flex: 1; display: grid; grid-template: 20px minmax(0, 1fr) / 20px minmax(0, 1fr); border-top: 1px solid var(--line); min-height: 0; }
.ruler-h { position: relative; overflow: hidden; border-bottom: 1px solid var(--line); background: linear-gradient(#ececec, #c2c2c2 50%); }
.rh-page { position: absolute; left: 30px; width: 555px; height: 19px; background: linear-gradient(#f4f4f4, #dcdcdc 20%, #fff 60%); }
.ruler-h > svg { position: relative; width: 100%; height: 19px; }
.nums text, .ruler-v text { font: 13px var(--mono); text-anchor: middle; }
.ruler-v text { text-anchor: start; }
.ruler-v { display: flex; flex-direction: column; overflow: hidden; border-right: 1px solid var(--line); min-height: 0; }
.ruler-v svg { width: 19px; overflow: visible; background: linear-gradient(90deg, #eee, #d2d2d2 30%, #fff 70%); }
.ruler-v svg.pink { background: linear-gradient(90deg, #eee, #d8c4c4 30%, #f9dcdc 70%); }
.ruler-v svg.rv-top, .ruler-v svg.rv-rest { background: linear-gradient(90deg, #e8e8e8, #bdbdbd 50%); }
.rv-top { height: 30px; }
.ruler-v svg.rv-rest { flex: 1 1 40px; height: 40px; min-height: 0; }
.desk { overflow: hidden; padding: 10px; }
.page { position: relative; width: 595px; background: #fff; box-shadow: 0 0 6px 3px #a0a0a0; }
.page::after { content: ""; position: absolute; inset: 0 20px; border: solid #a9a9fb; border-width: 0 1px; }
.band { display: flex; align-items: center; justify-content: center; padding-bottom: 7px; border-top: 1px solid #a9a9fb; color: #e4e4e4; font: 19px/24px var(--sans); }
.b-margin { height: 20px; }
.b-title { height: 79px; }
.b-phead { height: 35px; }
.b-chead { height: 61px; }
.b-detail { height: 125px; }
.b-cfoot { height: 45px; }
.b-pfoot { height: 54px; }
.b-sum { height: 42px; }

.side { display: grid; grid-template-rows: 309px minmax(0, 1fr); gap: 5px; min-height: 0; }
.scroll { flex: 1; display: flex; overflow: hidden; }
.items { flex: 1; }
.items h3 { display: flex; align-items: center; gap: 4px; height: 19px; padding-left: 5px; background: #d4d0c8; font: bold 15px/19px var(--mono); }
.items h3.cut { margin-top: -10px; }
.three, .four { display: grid; grid-auto-rows: 25px; padding-bottom: 1px; }
.three { grid-template-columns: repeat(3, 1fr); }
.four { grid-template-columns: repeat(4, 1fr); }
.three button, .four button { gap: 3px; padding-left: 2px; border: 1px solid transparent; border-radius: 3px; white-space: nowrap; }
.three .on { background: #cce8ff; border-color: #99d1ff; }
.track { width: 22px; padding: 30px 6px 0 10px; }
.thumb { height: 230px; background: #858585; }

.props { background: #fff; }
.props table { width: 100%; border-spacing: 0; font: 11px/18px var(--sans); }
.props tr { display: grid; grid-template-columns: 285px minmax(0, 1fr) 20px; }
.props thead tr { grid-template-columns: 1fr; }
.props th, .props td { height: 19px; padding: 0 0 0 2px; border-bottom: 1px solid #d4d0c8; text-align: left; font-weight: normal; line-height: 19px; }
.props thead th { height: 20px; background: #d4d0c8; }
.props thead span { display: flex; align-items: center; gap: 2px; font-size: 12px; }
.props td { padding-left: 0; border-left: 1px solid #d4d0c8; }
.props td.off { padding-left: 2px; color: #888; line-height: 17px; }
.props td.more { border-left: 0; }
.more button { width: 17px; height: 17px; margin-left: 2px; padding-top: 4px; justify-content: center; border: 1px solid #ccc; border-radius: 4px; background: #fdfdfd; font: bold 12px/12px var(--sans); }
.val { display: block; width: 100%; height: 18px; padding: 0 2px; border: 0; background: none; outline: 0; font: 13px/18px var(--mono); }
.combo.cls { height: 18px; margin-right: 1px; border-color: #ccc; }
.tick { position: relative; display: block; width: 16px; height: 16px; margin: 1px 0 0 3px; }
.tick input { appearance: none; display: block; width: 16px; height: 16px; margin: 0; border-radius: 3px; background: #005fb8; }
.tick svg { position: absolute; left: 4px; top: 5px; }
.desc { flex: none; display: flex; justify-content: space-between; align-items: flex-start; height: 58px; margin-top: auto; padding: 3px 5px 0 2px; background: #f0f0f0; border-top: 1px solid #a0a0a0; box-shadow: 0 -3px #ececec; font: 14px/20px var(--sans); }
.desc button { width: 16px; height: 16px; margin-top: 2px; border-radius: 50%; background: #8f8f8f; color: #666; justify-content: center; font: bold 12px/16px var(--sans); }

.output { grid-column: 2 / 4; display: flex; flex-direction: column; }
.otabs { display: grid; grid-template-columns: minmax(0, 1fr) minmax(0, 1fr); }
.otabs .head { height: 20px; border: 1px solid var(--line); border-bottom: 0; }
.otabs .head.hot { border-top: 3px solid #fcb62e; background: #fff; }
.obody { flex: 1; border: 2px solid #8093ad; }
.obody table { width: 100%; border-spacing: 0; table-layout: fixed; background: #fff; }
.obody th { height: 31px; padding: 0 0 0 5px; text-align: left; font-weight: normal; border-right: 1px solid #e5e5e5; }
.obody .mark { width: 19px; padding: 0; }
.obody .d { width: 876px; }
.status { height: 25px; border-top: 1px solid #a0a0a0; }
.taskbar { display: flex; height: 9px; border-top: 1px solid #b4bcc6; background: linear-gradient(90deg, #e2eef8 15%, #d4e0f8 45%, #d6dcf4 70%, #e0eef9 80%); overflow: hidden; }
.dot { width: 12px; height: 12px; margin: 6px 0 0 42px; border-radius: 50%; background: #c22; }
.pill { width: 47px; height: 10px; margin: 5px 574px 0 auto; border-radius: 4px; background: #f0f3fb; }

.meter { position: absolute; right: 0; bottom: 11px; width: 41px; height: 180px; padding: 13px 3px 0; border-radius: 12px 0 0 12px; background: rgba(112, 116, 124, .55); box-shadow: 0 0 4px rgba(0, 0, 0, .2); color: #fff; display: flex; flex-direction: column; align-items: center; }
.meter hr { width: 34px; margin: 0; border: 0; border-top: 1px solid #a0a6aa; }
.led { width: 14px; height: 14px; margin-bottom: 12px; border-radius: 50%; background: #07bd63; }
.gauge { width: 13px; height: 37px; margin: 7px 0 9px; border-radius: 7px; background: linear-gradient(#babbbe 45%, #cfb528 45%, #62c56a 75%, #3cbfc0); }
.rate { margin-top: 9px; font: 14px/16px var(--ui); text-align: center; }
.rate small { display: flex; align-items: center; gap: 4px; height: 8px; font: 11px/8px var(--ui); color: #ddd; }
.watermark { position: absolute; right: 14px; bottom: 8px; color: #858585; font: 18px/26px "Open Sans", sans-serif; text-shadow: -1px -1px #fff; }
.notes { position: absolute; inset: 0; width: 100%; height: 100%; pointer-events: none; }
.notes text { font: 26px "Noto Sans", "Noto Sans CJK SC", sans-serif; }
```
